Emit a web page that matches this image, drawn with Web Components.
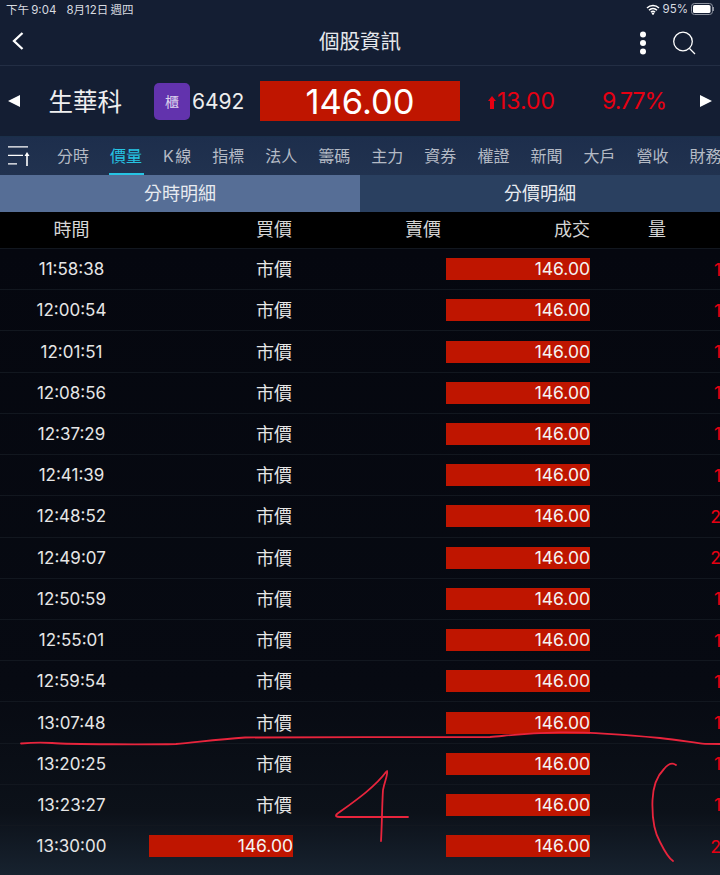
<!DOCTYPE html>
<html lang="zh-Hant"><head><meta charset="utf-8"><title>個股資訊</title>
<style>
html,body{margin:0;padding:0;background:#141e33}
body{width:720px;height:875px;overflow:hidden;font-family:Inter,"Noto Sans CJK TC",sans-serif;color:#eee}
stock-app{display:block}
</style></head><body>
<stock-app></stock-app>
<script>
function def(name,css,html,setup){
  customElements.define(name,class extends HTMLElement{
    constructor(){super();const s=this.attachShadow({mode:'open'});
      s.innerHTML=`<style>*{box-sizing:border-box}${css}</style>${html}`;}
    connectedCallback(){if(setup&&!this._d){this._d=1;setup.call(this,this.shadowRoot)}}
  });
}
def('status-bar',`:host{display:flex;align-items:center;height:20px;padding:0 6px 2px 6px;font-size:11.500px;color:#d8dbe0;white-space:pre;word-spacing:-1px}
 .sp{flex:1}svg{display:block}.w{margin-right:3px}.pc{margin-right:3px}`,
 `<span>下午 9:04</span><span style="margin-left:10px">8月12日 週四</span><span class="sp"></span>
 <svg class="w" width="14" height="11" viewBox="0 0 14 11"><path d="M1 4a8.500 8.500 0 0 1 12 0M3 6.200a5.400 5.400 0 0 1 8 0M5 8.200a2.600 2.600 0 0 1 4 0" fill="none" stroke="#fff" stroke-width="1.500"/><circle cx="7" cy="9.600" r="1.200" fill="#fff"/></svg>
 <span class="pc">95%</span>
 <svg width="23" height="12" viewBox="0 0 23 12"><rect x=".5" y=".5" width="21" height="11" rx="3" fill="none" stroke="#8d93a0"/><rect x="2" y="2" width="17.500" height="8" rx="1.600" fill="#fff"/><rect x="22" y="4" width="1" height="4" fill="#8d93a0"/></svg>`);
def('nav-bar',`:host{display:flex;align-items:center;justify-content:center;position:relative;height:46px;padding-bottom:5px;border-bottom:1px solid #232e44;font-size:20.500px;color:#e6e8ec}
 .l,.r{position:absolute;display:flex;align-items:center}.l{left:11px;top:11px}.r{right:24px;top:11px;gap:26px}svg{display:block}`,
 `<div class="l"><svg width="14" height="20" viewBox="0 0 14 20"><path d="M11.500 2 3 10l8.500 8" fill="none" stroke="#fff" stroke-width="2.300"/></svg></div>
 <span><slot></slot></span>
 <div class="r"><svg width="8" height="24" viewBox="0 0 8 24"><circle cx="4" cy="3.500" r="3" fill="#fff"/><circle cx="4" cy="12" r="3" fill="#fff"/><circle cx="4" cy="20.500" r="3" fill="#fff"/></svg>
 <svg width="23" height="24" viewBox="0 0 23 24"><circle cx="10" cy="10.500" r="9.300" fill="none" stroke="#fff" stroke-width="1.300"/><path d="M16.500 17.500 22 23" stroke="#fff" stroke-width="1.300"/></svg></div>`);
def('quote-bar',`:host{display:flex;align-items:center;height:70px;position:relative;white-space:nowrap}
 svg{display:block;flex:none}.name{font-size:24.500px;color:#f0f0f0;margin-left:28.500px;width:105.500px;padding-bottom:2px}
 .badge{width:36px;height:37px;border-radius:5px;background:#6233ad;color:#dcd2ee;font-size:14px;display:flex;align-items:center;justify-content:center}
 .code{font-size:21px;width:70px;padding-left:2px;color:#eee;}
 .price{width:200px;height:40px;background:#bf1500;color:#fff;font-size:34.500px;display:flex;align-items:center;justify-content:center;margin-right:26px}
 .chg{font-size:23px;color:#e60012;width:105px;margin-left:1px}.pct{font-size:23px;color:#e60012;width:98px;letter-spacing:-1px}`,
 `<svg style="margin-left:8px" width="12" height="12" viewBox="0 0 12 12"><path d="M12 0v12L0 6z" fill="#fff"/></svg>
 <span class="name">生華科</span><span class="badge">櫃</span><span class="code">6492</span><span class="price">146.00</span>
 <svg width="8" height="13" viewBox="0 0 8 13" style="margin:3px 0 0 2px"><path d="M4 0l4 5H6v8H2V5H0z" fill="#e60012"/></svg><span class="chg">13.00</span><span class="pct">9.77%</span>
 <svg width="12" height="12" viewBox="0 0 12 12"><path d="M0 0v12l12-6z" fill="#fff"/></svg>`);
def('tab-bar',`:host{display:flex;height:39px;background:linear-gradient(#1d2e4c,#21324f);border-top:1px solid #1a2f49;overflow:hidden;white-space:nowrap}
 .m{width:46.500px;flex:none;padding:9px 0 0 8px}svg{display:block}
 .t{flex:none;padding:0 10.500px;text-align:center;font-size:16px;line-height:38px;color:#b4bac5;position:relative;word-spacing:-3px}
 .t.on{color:#26c4e4}.t.on::after{content:"";position:absolute;left:9px;right:9px;bottom:0;height:2px;background:#26c4e4}`,
 `<div class="m"><svg width="23" height="21" viewBox="0 0 23 21"><path d="M0 .800h20M0 9.300h15M0 17.800h9" stroke="#fff" stroke-width="1.300"/><path d="M19 20V9" stroke="#fff" stroke-width="1.600"/><path d="M19 6l2.500 4h-5z" fill="#fff"/></svg></div>
 <div id="l" style="display:contents"></div>`,
 function(s){s.getElementById('l').innerHTML=['分時','價量','K 線','指標','法人','籌碼','主力','資券','權證','新聞','大戶','營收','財務'].map((x,i)=>`<span class="t${i==1?' on':''}">${x}</span>`).join('')});
def('seg-tabs',`:host{display:grid;grid-template-columns:1fr 1fr;height:37px;font-size:18px;line-height:37px;text-align:center;color:#e8ebf0}
 .a{background:#566e96}.b{background:#2a4060}`,`<div class="a">分時明細</div><div class="b">分價明細</div>`);
const COLS='grid-template-columns:143px 150px 148px 149px 131px;';
def('table-head',`:host{display:grid;${COLS}height:36px;background:#000;color:#d6d6d6;font-size:18px;line-height:35px;text-align:right}
 .a{text-align:center}.q{text-align:left;padding-left:58px}.b{padding-right:1px}.c{padding-right:0}`,
 `<span class="a">時間</span><span class="b">買價</span><span class="c">賣價</span><span>成交</span><span class="q">量</span>`);
def('trade-row',`:host{display:grid;${COLS}height:41.220px;align-items:center;border-top:1px solid #12171f;font-size:17.500px;color:#e6e6e6;text-align:right}
 .a{text-align:center;font-size:17px}.m{padding:0 1px 2px 0;font-size:18px}
 .m.bar{padding:0;font-size:17.500px}
 .bar{display:block;width:144px;height:22px;line-height:22px;background:#bf1500;color:#f4f4f4;justify-self:end}
 .q{color:#e60012}`,
 `<span class="a" id="t"></span><span class="m" id="b"></span><span></span><span class="bar">146.00</span><span class="q" id="q"></span>`,
 function(s){s.getElementById('t').textContent=this.getAttribute('t');
   s.getElementById('q').textContent=this.getAttribute('q');
   const b=s.getElementById('b');
   if(this.hasAttribute('bar')){b.className='m bar';b.textContent='146.00'}else b.textContent='市價';});
def('trade-table',`:host{display:block;height:627px;overflow:hidden;background:linear-gradient(#05070f 0,#070a12 70%,#0c1119 90%,#17222f 100%)}`,`<slot></slot>`);
def('ink-overlay',`:host{position:absolute;left:0;top:0;width:720px;height:875px;pointer-events:none}svg{display:block}
 path{fill:none;stroke:#e8243c;stroke-width:1.800;stroke-linecap:round;stroke-linejoin:round}`,
 `<svg width="720" height="875" viewBox="0 0 720 875">
 <path d="M21 743.500C32 742.500 45 742.500 52 743C70 744.500 150 744.500 176 744C195 742.500 215 739.500 245 737.500C300 736.800 440 737.500 490 737C505 736 520 733 560 732.300C600 732 630 735 660 738C680 740 695 743 705 743.800L720 744"/>
 <path d="M387 771C388 775 385 780 383 790C382 805 382 825 381 841"/>
 <path d="M386 772C375 787 355 801 337 814C335 816 336 817 340 817L408 817"/>
 <path d="M676 765C672 762 668 764 664 769C657 776 653 788 652.500 800C652 815 653 830 660 842C664 850 668 858 673 861"/></svg>`);
def('stock-app',`:host{display:block;position:relative;width:720px;height:875px;overflow:hidden;background:#141e33}`,
 `<status-bar></status-bar><nav-bar>個股資訊</nav-bar><quote-bar></quote-bar><tab-bar></tab-bar><seg-tabs></seg-tabs><table-head></table-head>
 <trade-table id="tb"></trade-table><ink-overlay></ink-overlay>`,
 function(s){
  const d=[['11:58:38',1],['12:00:54',1],['12:01:51',1],['12:08:56',1],['12:37:29',1],['12:41:39',1],['12:48:52',2],['12:49:07',2],['12:50:59',1],['12:55:01',1],['12:59:54',1],['13:07:48',1],['13:20:25',1],['13:23:27',1],['13:30:00',2]];
  s.getElementById('tb').innerHTML=d.map((r,i)=>`<trade-row t="${r[0]}" q="${r[1]}"${i==14?' bar':''}></trade-row>`).join('');
 });
</script>
</body></html>
